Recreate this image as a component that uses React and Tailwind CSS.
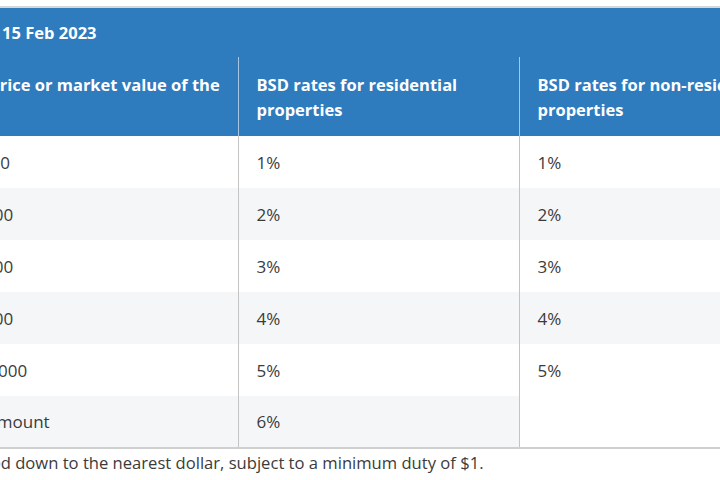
const rows = [
  { band: 'First $180,000', res: '1%', nonRes: '1%' },
  { band: 'Next $180,000', res: '2%', nonRes: '2%' },
  { band: 'Next $640,000', res: '3%', nonRes: '3%' },
  { band: 'Next $500,000', res: '4%', nonRes: '4%' },
  { band: 'Next $1,500,000', res: '5%', nonRes: '5%' },
  { band: 'Remaining amount', res: '6%' },
]

export default function App() {
  return (
    <div className="w-[720px] h-[480px] overflow-hidden bg-white font-['Open_Sans',sans-serif] text-[17px] text-[#3b3b3b]">
      <div className="ml-[-140px] w-[940px] pt-[6px]">
        <table className="w-full table-fixed border-collapse border-t-2 border-[#d6d6d6]">
          <colgroup>
            <col className="w-[378px]" />
            <col className="w-[281px]" />
            <col className="w-[281px]" />
          </colgroup>
          <thead className="bg-[#2e7bbe] text-white text-[16.5px]">
            <tr>
              <th colSpan={3} className="h-[50px] pl-[14px] pr-[18px] text-left font-bold leading-[25px]">
                BSD rates from 15 Feb 2023
              </th>
            </tr>
            <tr>
              <th className="h-[79px] pl-[49px] pr-[10px] text-left align-middle font-bold leading-[25px] border-r border-[#a9c7e3]">
                Purchase price or market value of the property
              </th>
              <th className="px-[18px] text-left align-middle font-bold leading-[25px] border-r border-[#a9c7e3]">
                BSD rates for residential properties
              </th>
              <th className="px-[18px] text-left align-middle font-bold leading-[25px]">
                BSD rates for non-residential properties
              </th>
            </tr>
          </thead>
          <tbody className="border-b-2 border-[#cfcfcf]">
            {rows.map((r, i) => (
              <tr key={r.band}>
                <td className={`h-[52px] pl-[39px] pr-[18px] leading-[25px] border-r border-[#c4c4c4] ${i % 2 ? 'bg-[#f5f6f7]' : 'bg-white'}`}>{r.band}</td>
                <td className={`px-[18px] leading-[25px] border-r border-[#c4c4c4] ${i % 2 ? 'bg-[#f5f6f7]' : 'bg-white'}`}>{r.res}</td>
                {r.nonRes ? (
                  <td className={`px-[18px] leading-[25px] ${i % 2 ? 'bg-[#f5f6f7]' : 'bg-white'}`}>{r.nonRes}</td>
                ) : (
                  <td className="bg-white" />
                )}
              </tr>
            ))}
          </tbody>
        </table>
        <p className="pl-[27px] pt-[1px] text-[16.6px] leading-[25px] whitespace-nowrap">
          Duty is rounded down to the nearest dollar, subject to a minimum duty of $1.
        </p>
      </div>
    </div>
  )
}
